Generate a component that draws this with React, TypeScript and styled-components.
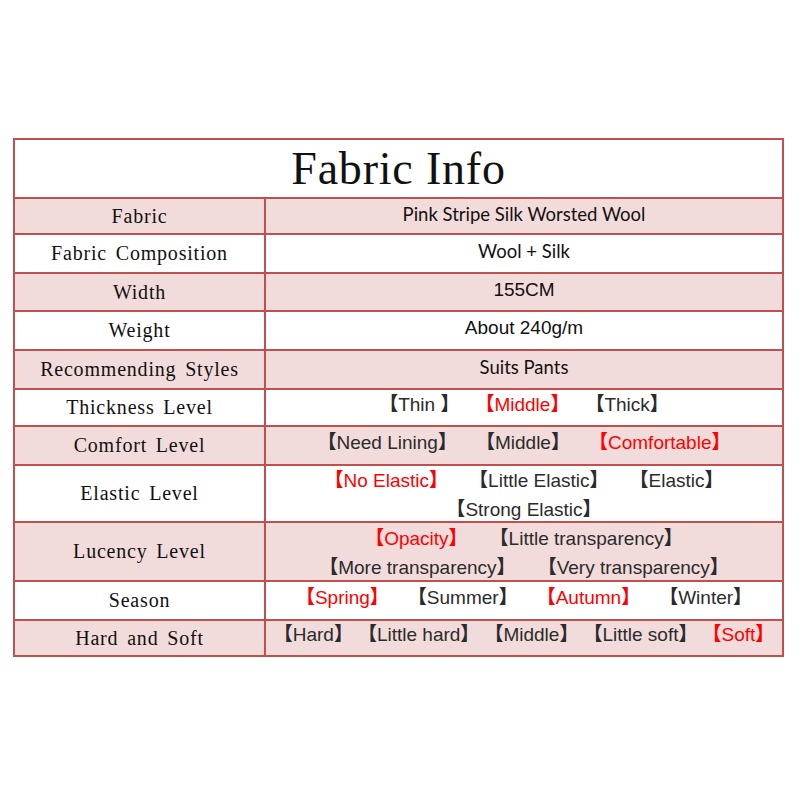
import React from 'react'
import styled, { createGlobalStyle } from 'styled-components'

const GlobalStyle = createGlobalStyle`
    body {
        margin: 0;
        background: #ffffff;
    }
`

const RED = '#ff0000'
const INK = '#2b2b2b'
const LINE = '#c0504d'
const SHADE = '#f2dcdb'

type Item = { text: string; red?: boolean }

type RowData = {
    label: string
    height: number
    shaded: boolean
    plain?: string
    face?: 'calibri' | 'arial'
    lines?: Item[][]
    gap?: number
}

const rows: RowData[] = [
    { label: 'Fabric', height: 36, shaded: true, plain: 'Pink Stripe Silk Worsted Wool', face: 'calibri' },
    { label: 'Fabric Composition', height: 39, shaded: false, plain: 'Wool + Silk', face: 'calibri' },
    { label: 'Width', height: 38, shaded: true, plain: '155CM', face: 'arial' },
    { label: 'Weight', height: 39, shaded: false, plain: 'About 240g/m', face: 'arial' },
    { label: 'Recommending Styles', height: 39, shaded: true, plain: 'Suits Pants', face: 'calibri' },
    {
        label: 'Thickness Level',
        height: 37,
        shaded: false,
        gap: 16,
        lines: [[{ text: 'Thin ' }, { text: 'Middle', red: true }, { text: 'Thick' }]],
    },
    {
        label: 'Comfort Level',
        height: 39,
        shaded: true,
        gap: 19,
        lines: [[{ text: 'Need Lining' }, { text: 'Middle' }, { text: 'Comfortable', red: true }]],
    },
    {
        label: 'Elastic Level',
        height: 57,
        shaded: false,
        gap: 21,
        lines: [
            [{ text: 'No Elastic', red: true }, { text: 'Little Elastic' }, { text: 'Elastic' }],
            [{ text: 'Strong Elastic' }],
        ],
    },
    {
        label: 'Lucency Level',
        height: 59,
        shaded: true,
        gap: 22,
        lines: [
            [{ text: 'Opacity', red: true }, { text: 'Little transparency' }],
            [{ text: 'More transparency' }, { text: 'Very transparency' }],
        ],
    },
    {
        label: 'Season',
        height: 39,
        shaded: false,
        gap: 19,
        lines: [
            [
                { text: 'Spring', red: true },
                { text: 'Summer' },
                { text: 'Autumn', red: true },
                { text: 'Winter' },
            ],
        ],
    },
    {
        label: 'Hard and Soft',
        height: 36,
        shaded: true,
        gap: 5,
        lines: [
            [
                { text: 'Hard' },
                { text: 'Little hard' },
                { text: 'Middle' },
                { text: 'Little soft' },
                { text: 'Soft', red: true },
            ],
        ],
    },
]

const Page = styled.div`
    padding: 138px 0 0 13px;
`

const Sheet = styled.div`
    width: 771px;
    box-sizing: border-box;
    border: 2px solid ${LINE};
    background: #ffffff;
`

const Title = styled.div`
    height: 57px;
    display: flex;
    align-items: center;
    justify-content: center;
    font-family: 'Liberation Serif', serif;
    font-size: 46px;
    letter-spacing: 0.8px;
    color: #111111;
`

const Row = styled.div<{ $height: number; $shaded: boolean }>`
    display: grid;
    grid-template-columns: 251px 1fr;
    grid-template-rows: minmax(0, 1fr);
    box-sizing: border-box;
    height: ${(p) => p.$height}px;
    border-top: 2px solid ${LINE};
    background: ${(p) => (p.$shaded ? SHADE : '#ffffff')};
`

const Label = styled.div`
    display: flex;
    align-items: center;
    justify-content: center;
    border-right: 2px solid ${LINE};
    font-family: 'Liberation Serif', serif;
    font-size: 20px;
    letter-spacing: 0.8px;
    word-spacing: 3px;
    color: #111111;
`

const Value = styled.div<{ $lift: number }>`
    display: flex;
    flex-direction: column;
    align-items: center;
    justify-content: center;
    padding-bottom: ${(p) => p.$lift}px;
    color: ${INK};
`

const Plain = styled.span<{ $face: 'calibri' | 'arial' }>`
    font-family: ${(p) =>
        p.$face === 'calibri' ? "Lato, 'Open Sans', sans-serif" : "'Liberation Sans', Arial, sans-serif"};
    font-size: ${(p) => (p.$face === 'calibri' ? '18.5px' : '19px')};
    color: #111111;
`

const Line = styled.div<{ $gap: number }>`
    display: flex;
    justify-content: center;
    align-items: baseline;
    gap: ${(p) => p.$gap}px;
    line-height: 27px;
`

const Choice = styled.span<{ $red?: boolean }>`
    display: inline-flex;
    align-items: baseline;
    font-family: 'Liberation Sans', Arial, sans-serif;
    font-size: 19px;
    white-space: pre;
    color: ${(p) => (p.$red ? RED : INK)};
`

const Bracket = styled.span`
    font-family: 'Noto Sans CJK SC', sans-serif;
    font-weight: 900;
    font-size: 19px;
`

const liftFor = (row: RowData) => {
    if (!row.lines) return 5
    return row.lines.length > 1 ? 0 : 9
}

const App: React.FC = () => {
    return (
        <Page>
            <GlobalStyle />
            <Sheet>
                <Title>Fabric Info</Title>
                {rows.map((row) => (
                    <Row key={row.label} $height={row.height} $shaded={row.shaded}>
                        <Label>{row.label}</Label>
                        <Value $lift={liftFor(row)}>
                            {row.plain && <Plain $face={row.face ?? 'arial'}>{row.plain}</Plain>}
                            {row.lines?.map((line, i) => (
                                <Line key={i} $gap={row.gap ?? 10}>
                                    {line.map((item) => (
                                        <Choice key={item.text} $red={item.red}>
                                            <Bracket>【</Bracket>
                                            {item.text}
                                            <Bracket>】</Bracket>
                                        </Choice>
                                    ))}
                                </Line>
                            ))}
                        </Value>
                    </Row>
                ))}
            </Sheet>
        </Page>
    )
}

export default App
